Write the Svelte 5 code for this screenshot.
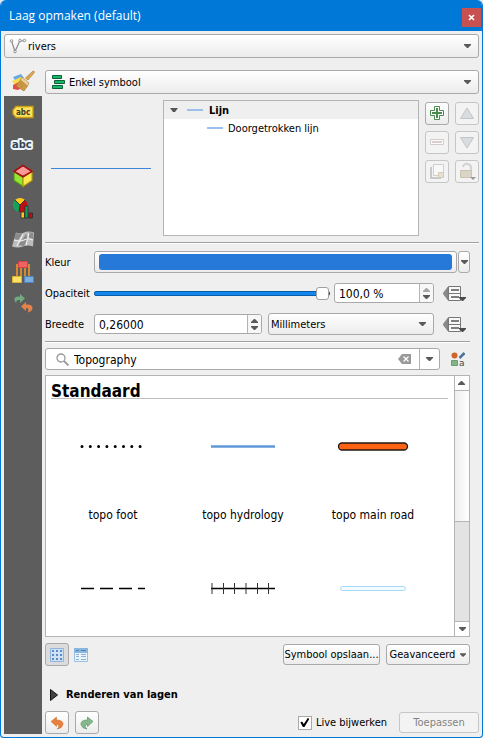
<script>
  let layer = $state('rivers');
  let symbolType = $state('Enkel symbool');
  let opacity = $state(100);
  let opacityText = $state('100,0 %');
  let width = $state('0,26000');
  let unit = $state('Millimeters');
  let filter = $state('Topography');
  let live = $state(true);

  const symbols = [
    { id: 'foot', name: 'topo foot' },
    { id: 'hydro', name: 'topo hydrology' },
    { id: 'main', name: 'topo main road' },
    { id: 'path' },
    { id: 'rail' },
    { id: 'river' }
  ];
</script>

{#snippet caret(w = 7)}
  <svg class="caret" width={w} height="4" viewBox="0 0 7 4" aria-hidden="true"><path d="M0 0h7v1L4 4H3L0 1z" fill="#5a5a5a" /></svg>
{/snippet}

{#snippet override()}
  <svg width="24" height="17" viewBox="0 0 24 17" aria-hidden="true">
    <path d="M5 2v13L0 8.500z" fill="#8a8a8a" stroke="#777" stroke-width=".6" />
    <path d="M5.500 1.500h12v14h-12z" fill="#f8f8f8" stroke="#777" />
    <path d="M5.500 8.500h12" stroke="#777" />
    <path d="M8 5h8M8 12h8" stroke="#555" stroke-width="1.400" />
    <path d="M16 12h7v1l-3 3h-1l-3-3z" fill="#4b4b4b" />
  </svg>
{/snippet}

<div class="window">
  <header>
    <h1>Laag opmaken (default)</h1>
    <button class="close" aria-label="Sluiten"><svg width="7" height="7" viewBox="0 0 7 7"><path d="M1 1l5 5M6 1L1 6" stroke="#fff" stroke-width="1.700" /></svg></button>
  </header>

  <main>
    <div class="combo layer">
      <svg class="lead" width="18" height="16" viewBox="0 0 18 16" aria-hidden="true">
        <path d="M2.500 3L6 13.500 10.500 3.500 15.500 2.500" fill="none" stroke="#8b8b8b" stroke-width="1.200" />
        <g fill="#eee" stroke="#888" stroke-width=".8"><circle cx="2.500" cy="3" r="1.300" /><circle cx="6" cy="13.500" r="1.300" /><circle cx="11" cy="2.500" r="1.300" /><circle cx="15.500" cy="2.500" r="1.300" /></g>
      </svg>
      <select bind:value={layer} aria-label="Laag"><option>rivers</option></select>
      {@render caret()}
    </div>

    <div class="columns">
      <nav aria-label="Stijlpagina's">
        <button class="current" aria-label="Symbologie">
          <svg width="24" height="22" viewBox="0 0 24 22">
            <path d="M2 7l8-3 3 4-8 4z" fill="#68a9e8" />
            <path d="M1 11l9-4 3 4-9 4z" fill="#f8dc4c" />
            <path d="M2 15l8-4 4 4-7 5-5-1z" fill="#e84a45" />
            <path d="M22 1c1.500 0 1.500 1.500 1 2l-6 7-2.500-2z" fill="#dba85a" stroke="#b07d33" stroke-width=".7" />
            <path d="M9.500 10l7 6-3.500 5-8-5z" fill="#cf9a45" stroke="#a9752c" stroke-width=".6" />
            <path d="M11 7l7 6-1.500 3-7-6z" fill="#ecd09a" stroke="#aa7e3a" stroke-width=".6" />
            <path d="M10 12l-2 4M12 14l-2 4" stroke="#b37f34" stroke-width=".7" />
          </svg>
        </button>
        <button aria-label="Labels">
          <svg width="22" height="14" viewBox="0 0 22 14">
            <path d="M4 1.500h17v11H4L1 9V5z" fill="#fde25c" stroke="#c99e0e" stroke-width="1.300" />
            <text x="4" y="10" font-family="DejaVu Sans Condensed" font-weight="bold" font-size="8" fill="#3d3a2c">abc</text>
          </svg>
        </button>
        <button aria-label="Maskers">
          <svg width="26" height="18" viewBox="0 0 26 18">
            <text x="2" y="13" font-family="DejaVu Sans Condensed" font-weight="bold" font-size="11" fill="#3a4450" stroke="#edf4fb" stroke-width="4" stroke-linejoin="round" paint-order="stroke">abc</text>
          </svg>
        </button>
        <button aria-label="3D-weergave">
          <svg width="22" height="24" viewBox="0 0 22 24">
            <path d="M11 1.500l9 6-9 5-9-5z" fill="#f99a98" stroke="#a51013" stroke-width="1.500" />
            <path d="M2 7.500l9 5.500v9.500l-9-6z" fill="#93e632" stroke="#4a9a10" stroke-width="1.200" />
            <path d="M20 7.500L11 13v9.500l9-6z" fill="#fce94f" stroke="#b99a07" stroke-width="1.200" />
            <path d="M2 7.500l9-6 9 6-9 5.500z" fill="none" stroke="#a51013" stroke-width="1.400" />
          </svg>
        </button>
        <button aria-label="Diagrammen">
          <svg width="22" height="22" viewBox="0 0 22 22">
            <path d="M8 8L3 3a7 7 0 0 1 10 0z" fill="#fcc81c" />
            <path d="M8 8L3 3a7 7 0 0 0 4 12z" fill="#17a05a" />
            <path d="M8 8l5-5a7 7 0 0 1-6 12z" fill="#bd1016" />
            <path d="M8 8L3 3M8 8l5-5M8 8l-1 7" stroke="#2b2b2b" stroke-width=".8" />
            <g stroke="#2b2b2b" stroke-width=".8">
              <path d="M9 15h3.500v6H9z" fill="#fcc81c" />
              <path d="M13 9h3v12h-3z" fill="#17a05a" />
              <path d="M17 16h3.500v5H17z" fill="#bd1016" />
            </g>
          </svg>
        </button>
        <button aria-label="Terreinschaduw">
          <svg width="24" height="18" viewBox="0 0 24 18">
            <path d="M5 1.500q4 2 8 0t10 0l-1 14q-5-2-10 0t-11 0z" fill="#bcbcbc" />
            <path d="M5 2q3 1.500 7 .5L7 9l-4-1zM18 1l4 1v6l-5-2zM11 9l4-6 2 5-4 7-6-1z" fill="#8b8b8b" />
            <path d="M12 3l-6 12M18 2l-3 12M3 9q6 2 10 0t9 0" stroke="#eee" stroke-width="1.200" fill="none" />
          </svg>
        </button>
        <button aria-label="Attributenformulier">
          <svg width="24" height="24" viewBox="0 0 24 24">
            <path d="M6 17V5h12v12M10 18V7M14 18V7" fill="none" stroke="#d18a32" stroke-width="2" />
            <path d="M7.500 1.500h9v6h-9z" fill="#ef6367" stroke="#d34145" />
            <path d="M1.500 16.500h9v6h-9z" fill="#fde16a" stroke="#d9b62a" />
            <path d="M13.500 16.500h9v6h-9z" fill="#7dacdf" stroke="#4e84c0" />
          </svg>
        </button>
        <button aria-label="Geschiedenis">
          <svg width="22" height="22" viewBox="0 0 22 22">
            <path d="M4.500 11Q-1 3 8 3.500V1l5 4.500L8 10V7Q3 6.500 4.500 11z" fill="#72aa80" />
            <path d="M14 9l-5 4.500 5 4.500v-3q4 0 1.500 4.500 5-1 5-4.500 0-4-6.500-3.500z" fill="#e58247" />
          </svg>
        </button>
      </nav>

      <div class="content">
        <div class="combo symbol">
          <svg class="lead" width="13" height="14" viewBox="0 0 13 14" aria-hidden="true"><g fill="#14b866" stroke="#0c6038"><path d="M.5.500h9v3h-9zM2.500 5.500h10v3h-10zM.5 10.500h10v3H.5z" /></g></svg>
          <select bind:value={symbolType} aria-label="Symbooltype"><option>Enkel symbool</option></select>
          {@render caret()}
        </div>

        <div class="layers">
          <div class="preview"><span></span></div>
          <ul class="tree">
            <li class="root"><svg width="8" height="4" viewBox="0 0 8 4" aria-hidden="true"><path d="M0 0h8L5 4H3z" fill="#555" /></svg><i></i><strong>Lijn</strong></li>
            <li class="leaf"><i></i><span>Doorgetrokken lijn</span></li>
          </ul>
          <div class="tools">
            <button class="btn" aria-label="Symboollaag toevoegen"><svg width="16" height="17" viewBox="0 0 16 17"><path d="M5.500 1.500h5v4h4v5h-4v4h-5v-4h-4v-5h4z" fill="#fff" stroke="#4a8c50" /><path d="M7 3h2v4h4v2H9v4H7V9H3V7h4z" fill="#4a8c50" /></svg></button>
            <button class="btn" disabled aria-label="Omhoog"><svg width="16" height="17" viewBox="0 0 16 17"><path d="M8 3l6.500 10.500h-13z" fill="#d9dde0" stroke="#bfc5c9" /></svg></button>
            <button class="btn" disabled aria-label="Symboollaag verwijderen"><svg width="16" height="17" viewBox="0 0 16 17"><path d="M1.500 5.500h13v5h-13z" fill="#fbfbfb" stroke="#d4cccc" /><path d="M3 8h10" stroke="#e0cccc" stroke-width="2" /></svg></button>
            <button class="btn" disabled aria-label="Omlaag"><svg width="16" height="17" viewBox="0 0 16 17"><path d="M1.500 3.500h13L8 14z" fill="#d9dde0" stroke="#bfc5c9" /></svg></button>
            <button class="btn" disabled aria-label="Symboollaag dupliceren"><svg width="16" height="17" viewBox="0 0 16 17"><path d="M2 4v11h10" fill="none" stroke="#c9c9c9" stroke-width="2" /><path d="M4.500 1.500h10v11h-10z" fill="#f8f8f8" stroke="#cfcfcf" /><path d="M9.500 9.500h5v5h-5z" fill="#e6e2d2" stroke="#d2ccb8" /></svg></button>
            <button class="btn" disabled aria-label="Kleur vergrendelen"><svg width="18" height="19" viewBox="0 0 18 19"><path d="M5 5q1-4 5-3t3 7" fill="none" stroke="#d1d1d1" stroke-width="2" /><path d="M2.500 8.500h11v7h-11z" fill="#dad5c4" stroke="#c9c3b0" /><path d="M12 15h6l-3 3z" fill="#999" /></svg></button>
          </div>
        </div>

        <hr />

        <div class="form inset">
          <label for="color">Kleur</label>
          <div class="field color"><button id="color" class="btn"><span></span></button><button class="btn drop" aria-label="Kleurmenu">{@render caret()}</button></div>

          <label for="opacity">Opaciteit</label>
          <div class="field">
            <input class="slider" id="opacity" type="range" min="0" max="100" bind:value={opacity} />
            <div class="spin short"><input type="text" bind:value={opacityText} aria-label="Opaciteit in procenten" /><span><button class="dim" disabled aria-label="Hoger">{@render caret()}</button><button aria-label="Lager">{@render caret()}</button></span></div>
            <button class="plain" aria-label="Gegevens-gedefinieerde opaciteit">{@render override()}</button>
          </div>

          <label for="width">Breedte</label>
          <div class="field wide">
            <div class="spin"><input id="width" type="text" bind:value={width} /><span><button aria-label="Hoger">{@render caret()}</button><button aria-label="Lager">{@render caret()}</button></span></div>
            <div class="combo unit"><select bind:value={unit} aria-label="Eenheid"><option>Millimeters</option></select>{@render caret()}</div>
            <button class="plain" aria-label="Gegevens-gedefinieerde breedte">{@render override()}</button>
          </div>
        </div>

        <hr class="inset-rule" />

        <div class="search inset">
          <div class="box">
            <svg width="13" height="13" viewBox="0 0 13 13" aria-hidden="true"><circle cx="5" cy="5" r="4" fill="none" stroke="#999" stroke-width="1.300" /><path d="M8 8l4.500 4.500" stroke="#999" stroke-width="1.800" /></svg>
            <input type="text" bind:value={filter} aria-label="Symbolen filteren" />
            <button class="plain" aria-label="Wissen"><svg width="13" height="10" viewBox="0 0 13 10"><path d="M4 0h9v10H4L0 5z" fill="#999" /><path d="M5.500 2.500l5 5M10.500 2.500l-5 5" stroke="#fff" stroke-width="1.200" /></svg></button>
            <button class="open" aria-label="Groepen">{@render caret()}</button>
          </div>
          <button class="plain style" aria-label="Stijlmanager"><svg width="14" height="15" viewBox="0 0 14 15"><circle cx="3.500" cy="3.500" r="3" fill="#cf652b" /><path d="M8.500 6l5-5" stroke="#4d709b" stroke-width="2.500" /><path d="M.5 8.500h6v5h-6z" fill="#83b387" stroke="#6ba071" /><text x="8" y="14" font-family="DejaVu Sans" font-size="9" fill="#444">a</text></svg></button>
        </div>

        <div class="gallery inset">
          <div class="view">
            <h2>Standaard</h2>
            <div class="symbols">
              {#each symbols as s}
                <button aria-label={s.name ?? s.id}>
                  <svg width="72" height="94" viewBox="0 0 72 94" aria-hidden="true">
                    {#if s.id === 'foot'}
                      <path d="M5 47.500h62" stroke="#000" stroke-width="3" stroke-linecap="round" stroke-dasharray="0 8.300" />
                    {:else if s.id === 'hydro'}
                      <path d="M4 47.500h64" stroke="#5f98d8" stroke-width="2.600" />
                    {:else if s.id === 'main'}
                      <rect x="1.500" y="44" width="69" height="7" rx="3.500" fill="#fd6312" stroke="#211815" stroke-width="1.300" />
                    {:else if s.id === 'path'}
                      <path d="M4 47.500h64" stroke="#000" stroke-width="1.400" stroke-dasharray="13 6" />
                    {:else if s.id === 'rail'}
                      <path d="M4 47.500h64" stroke="#000" stroke-width="1.600" />
                      <path d="M5 42v11M16.500 42v11M27.500 42v11M39 42v11M50.500 42v11M61.500 42v11" stroke="#333" />
                    {:else}
                      <rect x="3.500" y="45.500" width="65" height="4" rx="2" fill="#f4fbff" stroke="#a3daf8" />
                    {/if}
                  </svg>
                  {#if s.name}<span>{s.name}</span>{/if}
                </button>
              {/each}
            </div>
          </div>
          <div class="scroll">
            <button class="up" aria-label="Omhoog scrollen">{@render caret()}</button>
            <div class="track"><div class="thumb"></div></div>
            <button aria-label="Omlaag scrollen">{@render caret()}</button>
          </div>
        </div>

        <div class="actions inset">
          <button class="btn tool on" aria-label="Pictogramweergave"><svg width="14" height="14" viewBox="0 0 14 14"><path d="M.5.500h13v13H.5z" fill="#cfe1f4" stroke="#8fb5dc" /><g fill="#5c8bc4"><path d="M2 2h2v2H2zM6 2h2v2H6zM10 2h2v2h-2zM2 6h2v2H2zM6 6h2v2H6zM10 6h2v2h-2zM2 10h2v2H2zM6 10h2v2H6zM10 10h2v2h-2z" /></g></svg></button>
          <button class="plain" aria-label="Lijstweergave"><svg width="14" height="14" viewBox="0 0 14 14"><path d="M.5.500h13v13H.5z" fill="#eaf3fb" stroke="#9cc0e2" /><path d="M0 0h14v5H0z" fill="#8ab5df" /><path d="M2 2.500h3M7 2.500h5" stroke="#4f82bb" /><path d="M2 6.500h3M7 6.500h5M2 8.500h3M7 8.500h5M2 11.500h3M7 11.500h5" stroke="#8cb3da" /></svg></button>
          <button class="btn text save">Symbool opslaan...</button>
          <button class="btn text menu">Geavanceerd {@render caret(6)}</button>
        </div>

        <button class="group"><svg width="8" height="12" viewBox="0 0 8 12" aria-hidden="true"><path d="M.5.500L7.500 6 .5 11.500z" fill="#444" stroke="#111" /></svg>Renderen van lagen</button>

        <footer>
          <button class="btn tool" aria-label="Ongedaan maken"><svg width="14" height="14" viewBox="0 0 14 14"><path d="M1 5.500L6.500 1v3q7 0 6.500 4.500-1 4-6 4.500 4-3.500-.5-5v2.500z" fill="#e8813f" stroke="#cf6a29" stroke-width=".5" /></svg></button>
          <button class="btn tool" aria-label="Opnieuw"><svg width="14" height="14" viewBox="0 0 14 14"><path d="M13 5.500L7.500 1v3Q.5 4 1 8.500q1 4 6 4.500-4-3.500.5-5v2.500z" fill="#85b98d" stroke="#5a9665" stroke-width=".7" /></svg></button>
          <label class="live"><input type="checkbox" bind:checked={live} />Live bijwerken</label>
          <button class="btn text apply" disabled>Toepassen</button>
        </footer>
      </div>
    </div>
  </main>
</div>

<style>
  :global(body) { margin: 0; background: #dfe9f2; }
  .window, .window * { box-sizing: border-box; }
  .window {
    height: 100vh; min-height: 640px; display: flex; flex-direction: column;
    border: 1px solid #0078d7; border-top: 0; border-radius: 6px 6px 4px 4px; overflow: hidden;
    background: #efefef; color: #000;
    font: 11px/16px "DejaVu Sans Condensed", "DejaVu Sans", sans-serif;
  }
  button, input, select { font: inherit; color: inherit; margin: 0; }
  button { padding: 0; border: 0; background: none; display: flex; align-items: center; justify-content: center; }
  svg { display: block; flex: none; }
  header { flex: none; height: 31px; background: #0078d7; display: flex; align-items: center; justify-content: space-between; padding: 0 1px 0 8px; }
  h1 { margin: 0; font: 12px/16px "Noto Sans", "Open Sans", sans-serif; font-family: "Open Sans", sans-serif; color: #fff; }
  .close { width: 19px; height: 19px; background: #c75050; margin-top: 4px; }
  main { flex: 1; min-height: 0; display: flex; flex-direction: column; gap: 12px; padding: 3px; }
  .columns { flex: 1; min-height: 0; display: grid; grid-template-columns: 38px minmax(0, 1fr); gap: 3px; }
  nav { background: linear-gradient(#efefef 26px, #5d5d5d 26px); }
  nav button { width: 100%; height: 32px; }
  nav .current { height: 26px; padding-bottom: 4px; }
  .content { display: flex; flex-direction: column; min-height: 0; }
  .inset { margin-right: 9px; }

  .combo { position: relative; flex: none; height: 24px; }
  .combo select {
    width: 100%; height: 100%; appearance: none; padding: 2px 24px 0 4px;
    border: 1px solid #a9a9a9; border-radius: 3px; background: linear-gradient(#fff, #ececec);
  }
  .layer select, .symbol select { padding-left: 23px; }
  .combo .lead { position: absolute; left: 7px; top: 5px; pointer-events: none; }
  .layer .lead { left: 5px; top: 4px; }
  .combo :global(.caret) { position: absolute; right: 8px; top: 10px; pointer-events: none; }

  .btn { border: 1px solid #a9a9a9; border-radius: 3px; background: linear-gradient(#fff, #ececec); }
  .btn:disabled { border-color: #c6c6c6; color: #838383; background: #f3f3f3; }

  .layers { display: grid; grid-template-columns: 112px minmax(0, 1fr) 54px; gap: 6px; height: 136px; flex: none; margin-top: 6px; }
  .preview { display: flex; align-items: center; justify-content: center; }
  .preview span { width: 100px; height: 1px; background: #3d85d8; }
  .tree { list-style: none; margin: 0; padding: 0; border: 1px solid #b4b4b4; background: #fff; }
  .tree li { display: flex; align-items: center; height: 18px; }
  .tree i { width: 16px; height: 2px; background: #9cc0ea; }
  .tree strong, .tree span { padding-top: 2px; }
  .root { background: #efefef; padding-left: 6px; }
  .root i { margin: 0 6px 0 9px; }
  .leaf { padding-left: 43px; }
  .leaf i { margin-right: 5px; }
  .tools { display: grid; grid-template-columns: 24px 24px; grid-auto-rows: 23px; gap: 6px; padding-top: 2px; }

  hr { flex: none; width: 100%; height: 2px; margin: 6px 0; border: 0; border-top: 1px solid #a0a0a0; background: #fff; }
  .inset-rule { width: auto; margin: 6px 9px 5px 0; }

  .form { display: grid; grid-template-columns: 49px minmax(0, 1fr); grid-auto-rows: 22px; row-gap: 9px; align-items: center; margin-top: 1px; }
  .form label { padding-top: 2px; }
  .field { display: flex; align-items: center; height: 22px; gap: 4px; }
  .color { gap: 1px; }
  .color #color { flex: 1; height: 22px; padding: 2px 4px; }
  .color span { flex: 1; height: 16px; border-radius: 3px; background: #2678d9; }
  .drop { width: 12px; height: 22px; }
  .slider { flex: 1; min-width: 0; height: 14px; appearance: none; background: none; }
  .slider::-webkit-slider-runnable-track { height: 5px; border: 1px solid #0a5ca6; border-radius: 2px; background: #1487ee; }
  .slider::-webkit-slider-thumb { appearance: none; width: 13px; height: 13px; margin-top: -5px; border: 1px solid #a0a0a0; border-radius: 3px; background: #fff; }
  .spin { flex: 1; min-width: 0; height: 20px; display: flex; border: 1px solid #a9a9a9; border-radius: 3px; background: #fff; overflow: hidden; }
  .short { flex: 0 0 100px; }
  .spin input { flex: 1; min-width: 0; border: 0; padding: 2px 4px 0; background: none; font-size: 12px; }
  .spin span { width: 14px; border-left: 1px solid #b4b4b4; background: #f7f7f7; display: flex; flex-direction: column; padding: 2px 0; }
  .spin span button { flex: 1; }
  .spin span button:first-child :global(.caret) { transform: rotate(180deg); }
  .dim { opacity: .5; }
  .field .plain { width: 27px; margin-left: 5px; justify-content: flex-start; }
  .wide { gap: 6px; }
  .wide .plain { margin-left: 3px; }
  .unit { flex: 1; height: 22px; }
  .unit select { padding-left: 2px; }
  .unit :global(.caret) { top: 9px; }

  .search { display: flex; flex: none; height: 22px; }
  .box { flex: 1; min-width: 0; display: flex; align-items: center; border: 1px solid #a9a9a9; border-radius: 3px; background: #fff; padding-left: 10px; }
  .box input { flex: 1; min-width: 0; border: 0; padding: 2px 5px 0; font-size: 12px; background: none; }
  .box .plain { margin-right: 8px; }
  .open { width: 20px; align-self: stretch; border-left: 1px solid #b4b4b4; }
  .style { width: 30px; padding-left: 6px; }

  .gallery { flex: 1 1 0; min-height: 0; margin-top: 5px; display: flex; border: 1px solid #b4b4b4; background: #fff; }
  .view { flex: 1; min-width: 0; overflow: hidden; }
  h2 { height: 23px; margin: 0 6px 0 5px; border-bottom: 1px solid #bdbdbd; font-size: 17px; line-height: 30px; white-space: nowrap; }
  .symbols { display: grid; grid-template-columns: repeat(3, 130px); padding-left: 2px; }
  .symbols button { height: 142px; flex-direction: column; justify-content: flex-start; font-size: 12px; }
  .symbols span { padding-top: 14px; }
  .scroll { width: 15px; border-left: 1px solid #b4b4b4; display: flex; flex-direction: column; }
  .scroll button { height: 14px; }
  .up { transform: rotate(180deg); }
  .track { flex: 1; background: #e3e3e3; border: solid #b4b4b4; border-width: 1px 0; }
  .thumb { height: 57%; background: linear-gradient(90deg, #efefef, #fff); border-bottom: 1px solid #b4b4b4; }

  .actions { display: flex; flex: none; align-items: center; margin-top: 6px; }
  .tool { width: 24px; height: 23px; }
  .on { background: #dcdcdc; }
  .actions .plain { width: 24px; }
  .text { height: 21px; white-space: nowrap; padding-top: 1px; }
  .save { width: 97px; margin-left: auto; }
  .menu { width: 84px; margin-left: 6px; gap: 5px; }
  .group { flex: none; height: 20px; margin: 19px 0 6px; padding-left: 5px; gap: 8px; justify-content: flex-start; font-weight: bold; }
  footer { display: flex; flex: none; align-items: center; gap: 6px; }
  .live { display: flex; align-items: center; gap: 4px; margin-left: auto; margin-right: 6px; }
  .live input { appearance: none; width: 14px; height: 14px; border: 1px solid #a9a9a9; background: #fff; display: grid; place-items: center; }
  .live input:checked::before { content: ""; width: 9px; height: 9px; background: #000; clip-path: polygon(0 50%, 18% 40%, 38% 68%, 82% 0, 100% 8%, 45% 100%, 28% 100%); }
  .apply { width: 80px; }
</style>
